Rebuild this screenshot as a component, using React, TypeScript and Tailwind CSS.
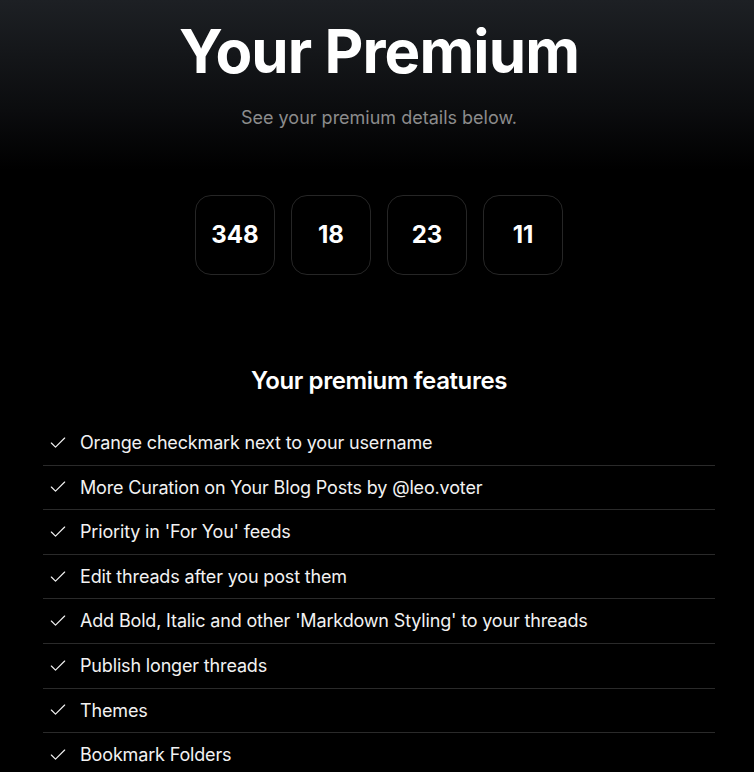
import { Check } from 'lucide-react';

const countdown = ['348', '18', '23', '11'];

const features = [
  'Orange checkmark next to your username',
  'More Curation on Your Blog Posts by @leo.voter',
  "Priority in 'For You' feeds",
  'Edit threads after you post them',
  "Add Bold, Italic and other 'Markdown Styling' to your threads",
  'Publish longer threads',
  'Themes',
  'Bookmark Folders',
];

export default function App() {
  return (
    <div
      className="min-h-screen w-full bg-black text-white bg-[linear-gradient(to_bottom,#1d2024_0px,#0b0c0e_110px,#000000_170px)]"
      style={{ fontFamily: 'Inter, "Noto Sans", sans-serif' }}
    >
      <div className="pl-1">
        {/* Header */}
        <div className="flex flex-col items-center pt-[21px]">
          <h1 className="text-[60px] leading-[60px] font-bold tracking-[-0.9px]">Your Premium</h1>
          <p className="mt-[23px] text-lg leading-7 text-[#8c8c8c]">See your premium details below.</p>
        </div>

        {/* Countdown */}
        <div className="mt-[63px] flex justify-center gap-4">
          {countdown.map((n, i) => (
            <div
              key={i}
              className="flex h-20 w-20 items-center justify-center rounded-2xl border border-[#262626] bg-black pb-px text-2xl font-bold"
            >
              {n}
            </div>
          ))}
        </div>

        {/* Features */}
        <h2 className="mt-[90px] text-center text-2xl leading-8 font-semibold tracking-[-0.4px]">
          Your premium features
        </h2>
        <ul className="mx-auto mt-6 w-[672px]">
          {features.map((f, i) => (
            <li
              key={i}
              className={`flex items-center gap-3 py-2 pl-[5px] text-lg leading-[27.6px] tracking-[-0.16px] text-[#f2f2f2] ${
                i < features.length - 1 ? 'border-b border-[#2a2a2a]' : ''
              }`}
            >
              <Check size={20} strokeWidth={1.4} className="shrink-0" />
              <span>{f}</span>
            </li>
          ))}
        </ul>
      </div>
    </div>
  );
}
